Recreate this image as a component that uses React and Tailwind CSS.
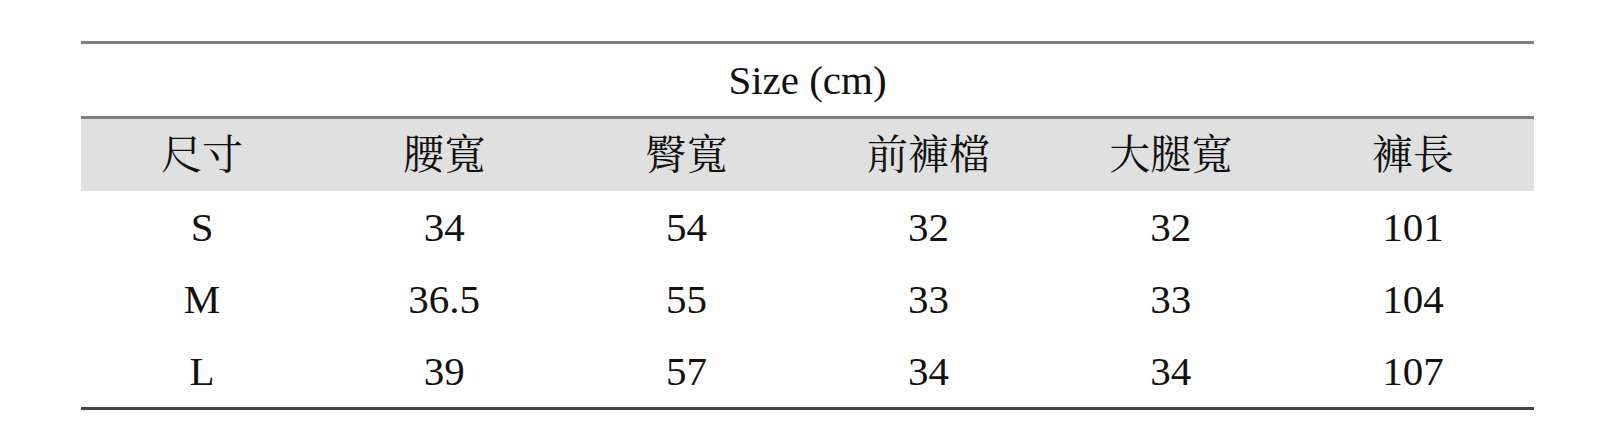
import React from "react";

const HEADERS = ["尺寸", "腰寬", "臀寬", "前褲檔", "大腿寬", "褲長"];

const ROWS = [
  ["S", "34", "54", "32", "32", "101"],
  ["M", "36.5", "55", "33", "33", "104"],
  ["L", "39", "57", "34", "34", "107"],
];

export default function App() {
  return (
    <div
      className="w-[1608px] h-[442px] bg-white pt-[41px] text-[#111] text-[41px]"
      style={{ fontFamily: '"Liberation Serif", "Noto Serif CJK TC", "Noto Sans CJK TC", serif' }}
    >
      <div className="ml-[81px] w-[1453px] border-t-[3px] border-b-[3px] border-t-[#7f7f7f] border-b-[#444]">
        <div className="h-[72px] flex items-center justify-center leading-none">Size (cm)</div>
        <div className="grid grid-cols-6 h-[75px] border-t-[3px] border-[#7f7f7f] bg-[#e0e0e0]">
          {HEADERS.map((h, i) => (
            <div key={i} className="flex items-center justify-center leading-none">
              {h}
            </div>
          ))}
        </div>
        {ROWS.map((row, r) => (
          <div key={r} className="grid grid-cols-6 h-[72px]">
            {row.map((cell, c) => (
              <div key={c} className="flex items-center justify-center leading-none">
                {cell}
              </div>
            ))}
          </div>
        ))}
      </div>
    </div>
  );
}
